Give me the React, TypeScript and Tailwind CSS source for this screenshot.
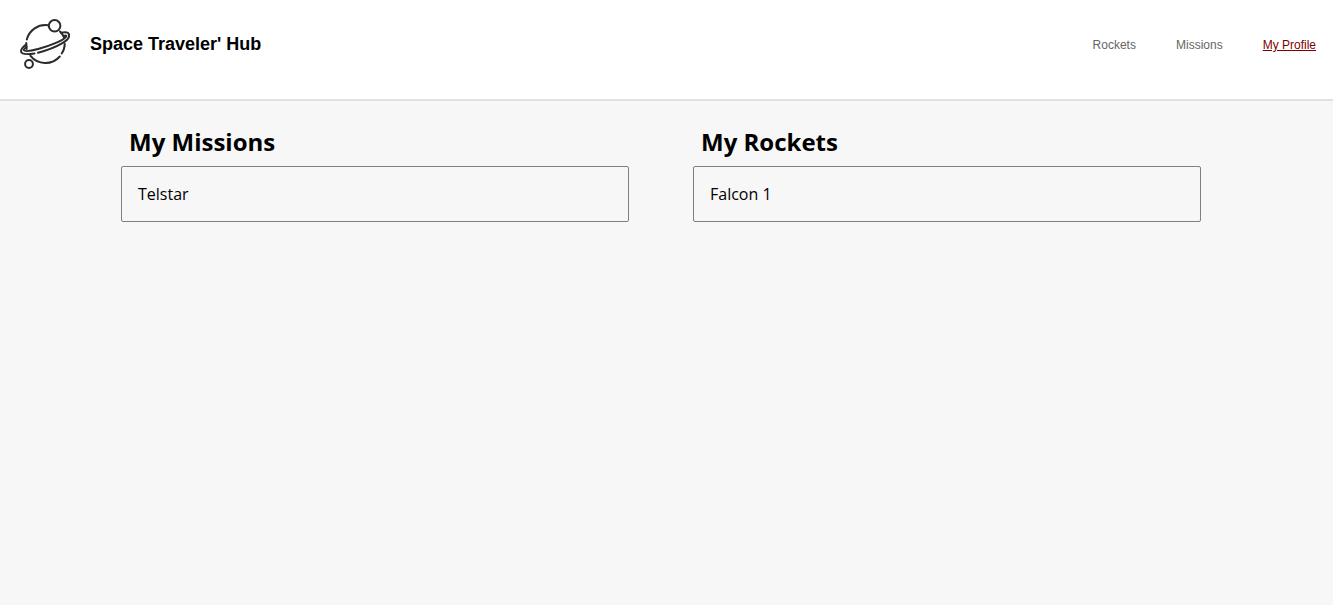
const Logo = () => (
  <svg viewBox="0 0 50 50" className="size-[50px]" fill="none" stroke="#2b2b2b" strokeWidth="2" strokeLinecap="round" strokeLinejoin="round" aria-hidden="true">
    <circle cx="34.6" cy="6.8" r="5.8" />
    <circle cx="9" cy="45" r="3.9" />
    <path d="M6.8 20.5A19.2 19.2 0 0 1 28 6.2" />
    <path d="M40 12.5Q43 15.5 44.3 19" />
    <path d="M44.8 25Q44.4 31 41.7 34.5" />
    <path d="M39.8 37.5A19.2 19.2 0 0 1 10.3 36.7" />
    <path d="M6.3 24L6.6 30" />
    <path d="M41 13.8C45 13 48.5 13.3 49 15.5C49.7 18 47 21.5 41.5 24.7C34.5 28.8 26 31.7 18 33.8" />
    <path d="M44 17C46 16.3 46.8 16.5 46 17.7C43.5 21.5 29 27.2 19 29.8C12 31.6 4.8 32.6 4 31.3C3.6 30.5 5 29 6.5 27.7" />
    <path d="M6 25.5C2.5 28.3 .8 31 1.1 32.8C1.7 35.3 7.5 35.5 14.5 34.5" />
  </svg>
);

const links = [
  { label: "Rockets", active: false },
  { label: "Missions", active: false },
  { label: "My Profile", active: true },
];

const sections = [
  { title: "My Missions", items: ["Telstar"] },
  { title: "My Rockets", items: ["Falcon 1"] },
];

export default function App() {
  return (
    <div className="min-h-screen bg-[#f7f7f7] font-['Open_Sans',sans-serif] text-black">
      <header className="flex items-start justify-between border-b-2 border-[#e3e0e0] bg-white pt-[19px] pr-[17px] pb-7 pl-5 font-['Liberation_Sans',sans-serif]">
        <div className="flex items-center gap-5">
          <Logo />
          <h1 className="text-lg font-bold">Space Traveler' Hub</h1>
        </div>
        <nav className="flex h-[52px] items-center gap-10 text-xs">
          {links.map((link) => (
            <a key={link.label} href="#" className={link.active ? "text-[#800000] underline" : "text-[#666666]"}>
              {link.label}
            </a>
          ))}
        </nav>
      </header>
      <main className="grid grid-cols-2 gap-16 pt-6 pr-[132px] pl-[121px]">
        {sections.map((section) => (
          <section key={section.title}>
            <h2 className="px-2 text-2xl leading-[34px] font-bold">{section.title}</h2>
            <ul className="mt-[7px] rounded-xs border border-[#808080]">
              {section.items.map((item) => (
                <li key={item} className="px-4 py-[15px] text-base">{item}</li>
              ))}
            </ul>
          </section>
        ))}
      </main>
    </div>
  );
}
